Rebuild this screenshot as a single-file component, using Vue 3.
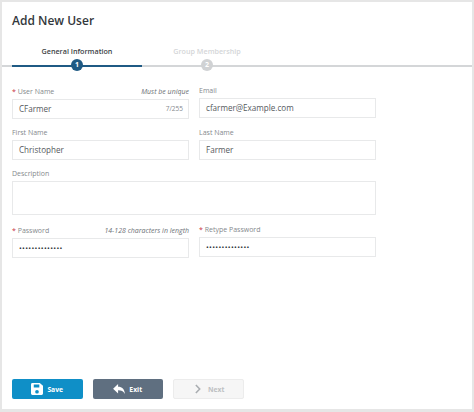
<script setup>
const dots = '••••••••••••••'
</script>

<template>
  <div class="page">
    <h1 class="title">Add New User</h1>

    <div class="steps">
      <div class="step active">
        <span class="step-label">General Information</span>
        <span class="step-num">1</span>
      </div>
      <div class="step">
        <span class="step-label">Group Membership</span>
        <span class="step-num">2</span>
      </div>
    </div>

    <form class="form" @submit.prevent>
      <div class="field">
        <div class="label-row">
          <label><span class="req">*</span> User Name</label>
          <em class="hint">Must be unique</em>
        </div>
        <div class="input">CFarmer<span class="count">7/255</span></div>
      </div>
      <div class="field raised">
        <div class="label-row"><label>Email</label></div>
        <div class="input">cfarmer@Example.com</div>
      </div>

      <div class="field">
        <div class="label-row"><label>First Name</label></div>
        <div class="input">Christopher</div>
      </div>
      <div class="field">
        <div class="label-row"><label>Last Name</label></div>
        <div class="input">Farmer</div>
      </div>

      <div class="field wide">
        <div class="label-row"><label>Description</label></div>
        <div class="input area"></div>
      </div>

      <div class="field">
        <div class="label-row">
          <label><span class="req">*</span> Password</label>
          <em class="hint">14-128 characters in length</em>
        </div>
        <div class="input secret">{{ dots }}</div>
      </div>
      <div class="field raised">
        <div class="label-row"><label><span class="req">*</span> Retype Password</label></div>
        <div class="input secret">{{ dots }}</div>
      </div>
    </form>

    <div class="actions">
      <button class="btn save" type="button">
        <svg width="12" height="12" viewBox="0 0 13 13">
          <path fill="#fff" fill-rule="evenodd" d="M1.5 0h8L13 3v8.5a1.5 1.5 0 0 1-1.500 1.500h-10A1.500 1.500 0 0 1 0 11.500v-10A1.500 1.500 0 0 1 1.500 0zM3 1.500V5h6V1.500zM6.500 7.500a2 2 0 1 0 0 4 2 2 0 0 0 0-4z"/>
        </svg>
        Save
      </button>
      <button class="btn exit" type="button">
        <svg width="12" height="10" viewBox="0 0 13 11">
          <path fill="#fff" d="M5.500 0v3C10 3 12.500 5.500 13 11c-1.500-3-4-4-7.500-4v3.500L0 5.200z"/>
        </svg>
        Exit
      </button>
      <button class="btn next" type="button" disabled>
        <svg width="6" height="10" viewBox="0 0 7 11">
          <path fill="none" stroke="#a9adb1" stroke-width="1.800" d="M1 .8l4.500 4.700L1 10.200"/>
        </svg>
        Next
      </button>
    </div>
  </div>
</template>

<style>
html, body {
  margin: 0;
  background: #fff;
}
</style>

<style scoped>
.page {
  box-sizing: border-box;
  width: 474px;
  height: 412px;
  display: flex;
  flex-direction: column;
  background: #fff;
  border: solid #e6e6e6;
  border-width: 2px 2px 3px 2px;
  font-family: "Open Sans", "Liberation Sans", sans-serif;
  color: #4a4f54;
  overflow: hidden;
}

.title {
  margin: 0;
  padding: 9px 0 0 10px;
  height: 26px;
  font-size: 12px;
  line-height: 20px;
  font-weight: 600;
  color: #33383c;
}

.steps {
  display: flex;
  margin-top: 7px;
  padding-left: 10px;
  height: 30px;
  background: linear-gradient(#d4d6d8, #d4d6d8) 0 21px / 100% 2px no-repeat;
}

.step {
  width: 130px;
  display: flex;
  flex-direction: column;
  align-items: center;
  background: linear-gradient(#1f5a84, #1f5a84) 0 21px / 100% 2px no-repeat;
  background-size: 0 0;
}

.step.active {
  background-size: 100% 2px;
}

.step-label {
  font-size: 7.200px;
  line-height: 11px;
  height: 13px;
  padding-top: 2px;
  font-weight: 600;
  color: #d4d6d8;
}

.active .step-label {
  color: #3d4347;
}

.step-num {
  width: 12px;
  height: 12px;
  border-radius: 50%;
  background: #d0d2d4;
  color: #fff;
  font-size: 7px;
  line-height: 12px;
  font-weight: 700;
  text-align: center;
}

.active .step-num {
  background: #1f5a84;
}

.form {
  display: grid;
  grid-template-columns: 177px 177px;
  column-gap: 10px;
  row-gap: 7px;
  margin: 11px 0 0 10px;
}

.field {
  display: flex;
  flex-direction: column;
  min-width: 0;
}

.raised {
  margin-top: -1px;
}

.wide {
  grid-column: 1 / 3;
  margin-bottom: 2px;
}

.label-row {
  box-sizing: border-box;
  display: flex;
  justify-content: space-between;
  align-items: flex-start;
  height: 14px;
  padding-top: 1px;
}

label {
  font-size: 7px;
  line-height: 12px;
  color: #85898d;
}

.req {
  color: #c8323c;
}

.hint {
  font-size: 7px;
  line-height: 12px;
  color: #6d7175;
}

.input {
  box-sizing: border-box;
  position: relative;
  height: 20px;
  padding: 0 6px;
  border: 1px solid #e8e9ea;
  font-size: 8.100px;
  line-height: 18px;
  color: #55595d;
  background: #fff;
}

.area {
  height: 34px;
}

.secret {
  font-size: 7.500px;
  letter-spacing: .300px;
  color: #33383c;
}

.count {
  position: absolute;
  right: 5px;
  top: 0;
  font-size: 6.500px;
  color: #85898d;
}

.actions {
  display: flex;
  gap: 10px;
  margin: auto 0 10px 10px;
}

.btn {
  box-sizing: border-box;
  width: 70.500px;
  height: 20px;
  display: flex;
  align-items: center;
  justify-content: center;
  gap: 4px;
  padding: 0;
  border: 0;
  border-radius: 2px;
  font-family: inherit;
  font-size: 6.800px;
  font-weight: 700;
  color: #fff;
}

.save {
  background: #0f8fc7;
}

.exit {
  background: #5f6f80;
}

.next {
  gap: 7px;
  padding-left: 3px;
  background: #f6f6f6;
  border: 1px solid #ececec;
  color: #bdc0c3;
}
</style>
